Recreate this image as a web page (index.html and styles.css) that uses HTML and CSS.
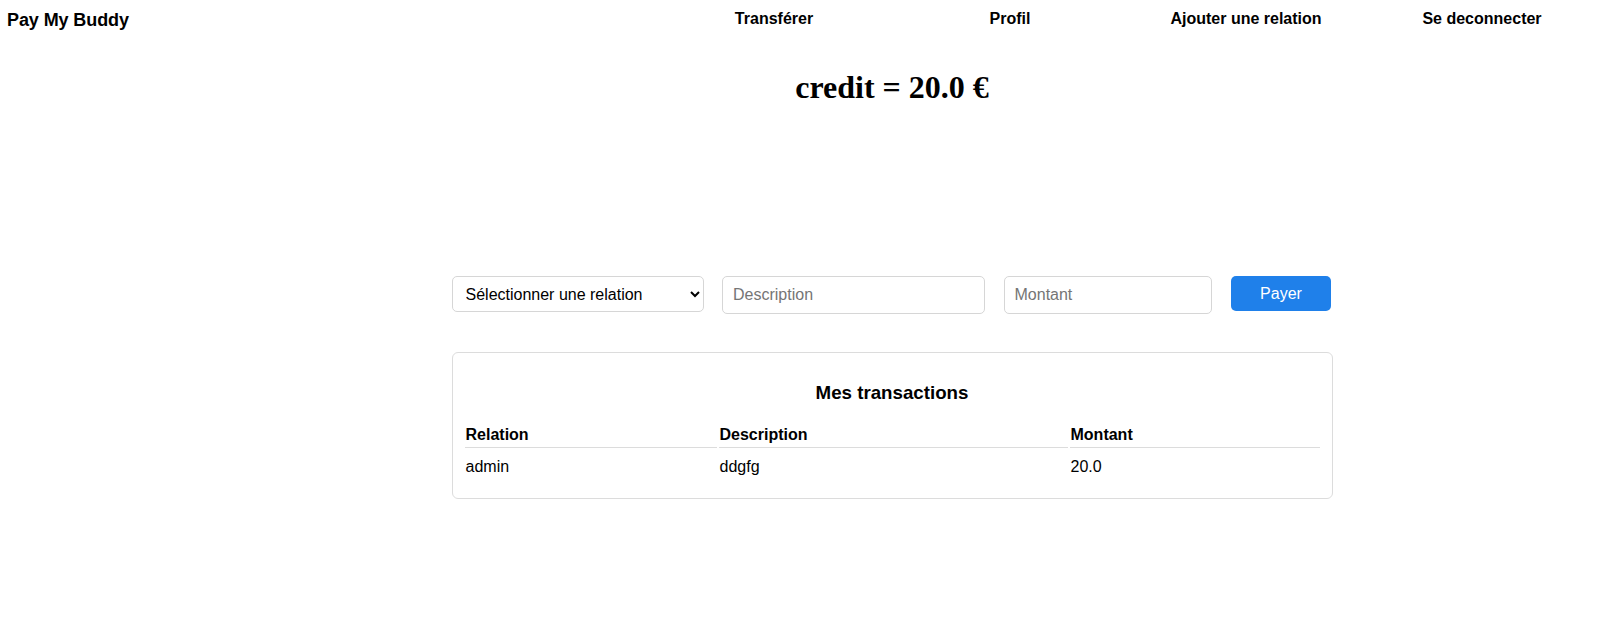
FILE: index.html
```html
<!DOCTYPE html>
<html lang="fr">
<head>
<meta charset="utf-8">
<title>Pay My Buddy</title>
<link rel="stylesheet" href="styles.css">
</head>
<body>
<header class="topbar">
  <div class="logo">Pay My Buddy</div>
  <nav class="nav">
    <a class="nav-link" href="#">Transférer</a>
    <a class="nav-link" href="#">Profil</a>
    <a class="nav-link" href="#">Ajouter une relation</a>
    <a class="nav-link" href="#">Se deconnecter</a>
  </nav>
</header>
<main class="page">
  <div class="content">
    <h1 class="credit">credit = 20.0 €</h1>
    <form class="pay-form">
      <select class="field select-field">
        <option>Sélectionner une relation</option>
      </select>
      <input class="field input-desc" type="text" placeholder="Description">
      <input class="field input-amount" type="text" placeholder="Montant">
      <button class="pay-btn" type="button">Payer</button>
    </form>
    <section class="card">
      <h3 class="card-title">Mes transactions</h3>
      <table class="tx-table">
        <thead>
          <tr>
            <th class="col-rel">Relation</th>
            <th class="col-desc">Description</th>
            <th class="col-amt">Montant</th>
          </tr>
        </thead>
        <tbody>
          <tr>
            <td>admin</td>
            <td>ddgfg</td>
            <td>20.0</td>
          </tr>
        </tbody>
      </table>
    </section>
  </div>
</main>
</body>
</html>
```
FILE: styles.css
```css
* { box-sizing: border-box; }

body {
  margin: 0;
  font-family: "Liberation Sans", Arial, sans-serif;
  font-size: 16px;
  color: #000;
  background: #fff;
}

.topbar {
  display: flex;
  align-items: flex-start;
  justify-content: space-between;
  padding: 10px 16px 0 7px;
}

.logo {
  font-size: 18px;
  font-weight: bold;
  letter-spacing: -0.1px;
}

.nav {
  display: flex;
}

.nav-link {
  width: 236px;
  text-align: center;
  font-weight: bold;
  color: #000;
  text-decoration: none;
}

.page {
  padding-left: 168px;
}

.content {
  width: 881px;
  margin: 0 auto;
}

.credit {
  font-family: "Liberation Serif", "Times New Roman", serif;
  font-size: 32px;
  font-weight: bold;
  text-align: center;
  margin: 38px 0 0;
}

.pay-form {
  display: flex;
  align-items: flex-start;
  gap: 18.5px;
  margin-top: 170px;
}

.field {
  font-family: "Liberation Sans", Arial, sans-serif;
  font-size: 16px;
  border: 1px solid #d6d6d6;
  border-radius: 5px;
  background: #fff;
  color: #000;
}

.select-field {
  width: 252px;
  height: 36px;
  padding: 0 10px 0 9px;
}

.input-desc,
.input-amount {
  height: 38px;
  padding: 0 10px;
}

.input-desc { width: 263px; }
.input-amount { width: 208px; }

.field::placeholder { color: #757575; }

.pay-btn {
  width: 100px;
  height: 35px;
  margin-left: 1px;
  border: none;
  border-radius: 5px;
  background: #1f80ea;
  color: #fff;
  font-family: "Liberation Sans", Arial, sans-serif;
  font-size: 16px;
}

.card {
  margin-top: 38px;
  border: 1px solid #dcdcdc;
  border-radius: 6px;
  padding: 10px 10px 15px;
}

.card-title {
  font-size: 18.72px;
  font-weight: bold;
  text-align: center;
  margin: 19px 0 18px;
}

.tx-table {
  width: 100%;
  table-layout: fixed;
  border-spacing: 2px;
}

.tx-table th {
  text-align: left;
  font-weight: bold;
  padding: 2px 1px 3px;
  border-bottom: 1px solid #dcdcdc;
}

.col-rel { width: 252px; }
.col-desc { width: 349px; }

.tx-table td {
  padding: 8px 1px 5px;
}
```
